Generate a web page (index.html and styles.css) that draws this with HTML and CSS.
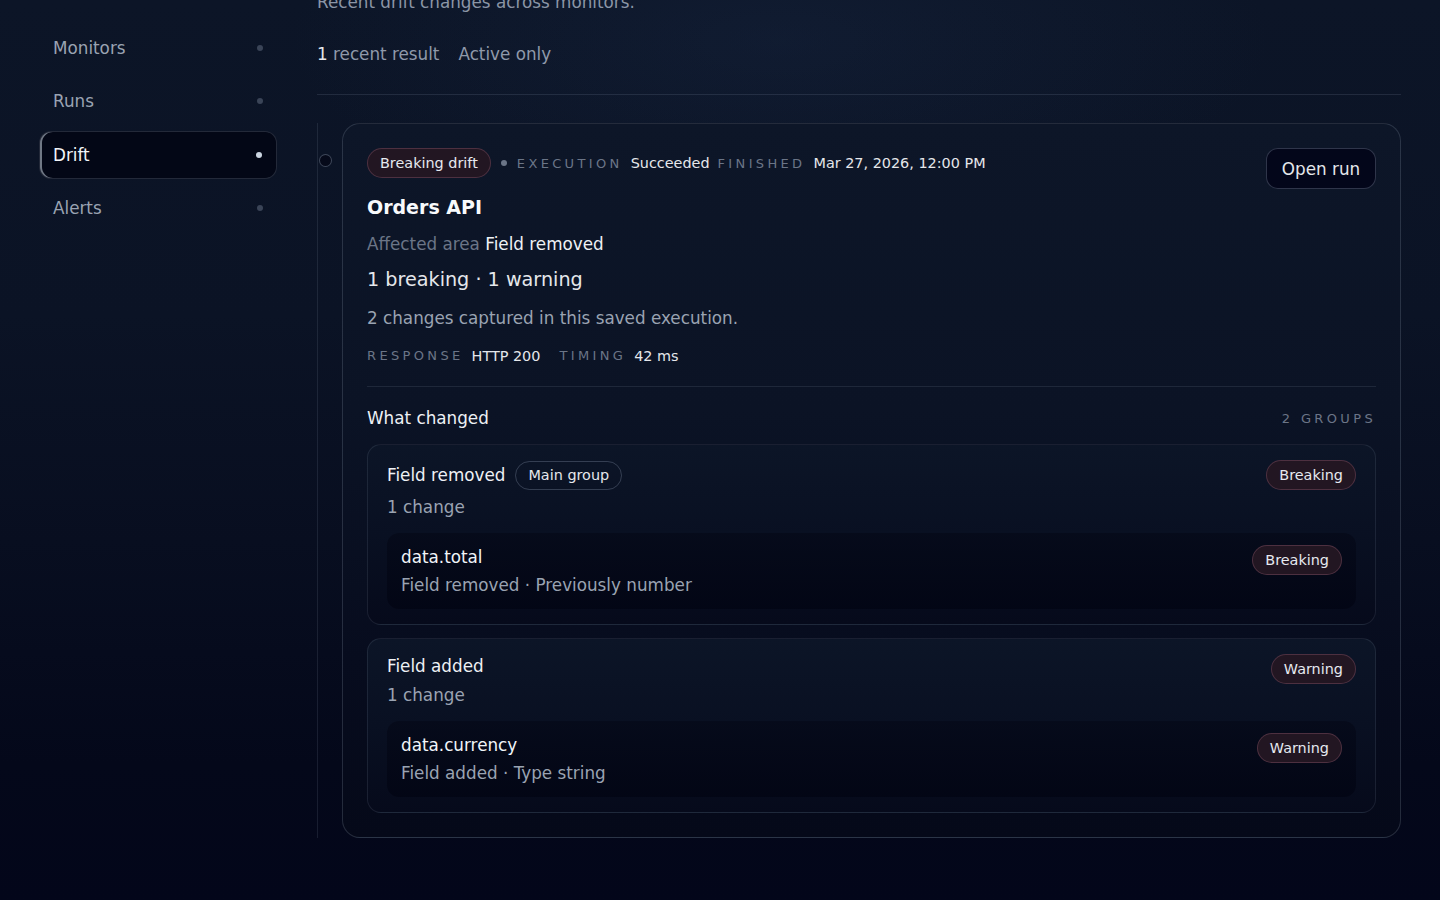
FILE: index.html
```html
<!DOCTYPE html>
<html lang="en">
<head>
<meta charset="utf-8">
<title>Drift</title>
<link rel="stylesheet" href="styles.css">
</head>
<body>
<div class="layout">
  <nav class="sidebar">
    <a class="nav-item"><span>Monitors</span><i class="nav-dot"></i></a>
    <a class="nav-item"><span>Runs</span><i class="nav-dot"></i></a>
    <a class="nav-item active"><span>Drift</span><i class="nav-dot"></i></a>
    <a class="nav-item"><span>Alerts</span><i class="nav-dot"></i></a>
  </nav>
  <main class="main">
    <p class="subtitle">Recent drift changes across monitors.</p>
    <div class="filters">
      <span class="count"><b>1</b> recent result</span>
      <span class="filter">Active only</span>
    </div>
    <hr class="rule">
    <div class="timeline">
      <div class="timeline-item">
        <span class="marker"></span>
        <article class="card">
          <div class="card-head">
            <div class="card-info">
              <div class="meta">
                <span class="badge">Breaking drift</span>
                <span class="meta-dot"></span>
                <span class="label">Execution</span>
                <span class="value">Succeeded</span>
                <span class="label">Finished</span>
                <span class="value">Mar 27, 2026, 12:00 PM</span>
              </div>
              <h2 class="title">Orders API</h2>
              <p class="affected"><span class="muted">Affected area</span> Field removed</p>
              <p class="summary">1 breaking · 1 warning</p>
              <p class="desc">2 changes captured in this saved execution.</p>
              <div class="metrics">
                <span class="label">Response</span><span class="value">HTTP 200</span>
                <span class="label sep">Timing</span><span class="value">42 ms</span>
              </div>
            </div>
            <button class="open-btn">Open run</button>
          </div>
          <hr class="card-rule">
          <div class="changes-head">
            <span class="changes-title">What changed</span>
            <span class="label">2 groups</span>
          </div>
          <div class="groups">
            <section class="group">
              <div class="group-head">
                <div class="group-info">
                  <div class="group-name">
                    <span>Field removed</span>
                    <span class="pill">Main group</span>
                  </div>
                  <p class="group-count">1 change</p>
                </div>
                <span class="badge">Breaking</span>
              </div>
              <div class="change">
                <div class="change-text">
                  <p class="change-path">data.total</p>
                  <p class="change-desc">Field removed · Previously number</p>
                </div>
                <span class="badge">Breaking</span>
              </div>
            </section>
            <section class="group">
              <div class="group-head">
                <div class="group-info">
                  <div class="group-name">
                    <span>Field added</span>
                  </div>
                  <p class="group-count">1 change</p>
                </div>
                <span class="badge">Warning</span>
              </div>
              <div class="change">
                <div class="change-text">
                  <p class="change-path">data.currency</p>
                  <p class="change-desc">Field added · Type string</p>
                </div>
                <span class="badge">Warning</span>
              </div>
            </section>
          </div>
        </article>
      </div>
    </div>
  </main>
</div>
</body>
</html>
```

FILE: styles.css
```css
* { box-sizing: border-box; }
html, body { height: 100%; }
body {
  margin: 0;
  font-family: "DejaVu Sans", "Noto Sans", sans-serif;
  color: #e5e7eb;
  background:
    radial-gradient(ellipse 700px 260px at 780px 40px, rgba(30, 48, 80, 0.25), transparent 70%),
    linear-gradient(180deg, #0c1527 0%, #0b1325 35%, #080e20 60%, #04081a 85%, #03061a 100%);
  overflow: hidden;
}
p, h2 { margin: 0; }

.layout {
  display: grid;
  grid-template-columns: 238px 1fr;
  column-gap: 40px;
  padding: 24px 39px 0 39px;
  height: 900px;
}

/* Sidebar */
.sidebar {
  display: flex;
  flex-direction: column;
  gap: 5.4px;
}
.nav-item {
  display: flex;
  align-items: center;
  justify-content: space-between;
  height: 48px;
  padding: 0 13px;
  border-radius: 12px;
  font-size: 16.8px;
  color: #9aa3b2;
  border: 1px solid transparent;
}
.nav-dot {
  width: 6px;
  height: 6px;
  border-radius: 50%;
  background: #3a4457;
}
.nav-item.active {
  background: #030716;
  color: #f1f5f9;
  border-color: rgba(148, 163, 184, 0.22);
  box-shadow: inset 2px 0 0 rgba(203, 213, 225, 0.55);
}
.nav-item.active .nav-dot { background: #cbd5e1; margin-right: 1px; }

/* Main */
.main {
  margin-top: -34px;
  display: flex;
  flex-direction: column;
}
.subtitle {
  font-size: 16.8px;
  line-height: 24px;
  color: #8b95a6;
}
.filters {
  margin-top: 28px;
  display: flex;
  gap: 19px;
  font-size: 16.8px;
  line-height: 24px;
  color: #8f99aa;
}
.count b { font-weight: normal; color: #e5e7eb; }
.rule {
  margin: 28px 0 0 0;
  border: 0;
  border-top: 1px solid rgba(148, 163, 184, 0.16);
  height: 0;
}

.timeline { margin-top: 28px; }
.timeline-item {
  position: relative;
  padding-left: 24px;
  border-left: 1px solid rgba(148, 163, 184, 0.14);
}
.marker {
  position: absolute;
  left: 1px;
  top: 31px;
  width: 13px;
  height: 13px;
  border-radius: 50%;
  border: 1px solid rgba(148, 163, 184, 0.4);
  background: #060a1a;
}

.card {
  border: 1px solid rgba(148, 163, 184, 0.22);
  border-radius: 18px;
  padding: 24px;
  background: linear-gradient(180deg, #0d1628 0%, #0b1325 40%, #070c1e 75%, #050919 100%);
}
.card-head {
  display: flex;
  justify-content: space-between;
  align-items: flex-start;
}
.card-info { display: flex; flex-direction: column; }

.meta {
  display: flex;
  align-items: center;
  gap: 8px;
  height: 30px;
}
.badge {
  display: inline-flex;
  align-items: center;
  height: 30px;
  padding: 0 12px;
  border-radius: 15px;
  background: #221622;
  border: 1px solid rgba(190, 120, 145, 0.28);
  color: #e6e9f0;
  font-size: 14.4px;
  white-space: nowrap;
  flex-shrink: 0;
}
.meta-dot {
  width: 6px;
  height: 6px;
  border-radius: 50%;
  background: #6b7587;
  margin: 0 2px;
}
.label {
  font-size: 13px;
  letter-spacing: 3.35px;
  text-transform: uppercase;
  color: #6b7587;
}
.value {
  font-size: 14.4px;
  color: #e5e7eb;
}
.title {
  margin-top: 17px;
  font-size: 19px;
  line-height: 24px;
  font-weight: bold;
  color: #f8fafc;
}
.affected {
  margin-top: 13px;
  font-size: 16.8px;
  line-height: 24px;
  color: #eef1f5;
}
.muted { color: #6b7587; }
.summary {
  margin-top: 11px;
  font-size: 19.2px;
  line-height: 26px;
  color: #e5e7eb;
}
.desc {
  margin-top: 13px;
  font-size: 16.8px;
  line-height: 24px;
  color: #9aa3b2;
}
.metrics {
  margin-top: 16px;
  display: flex;
  align-items: center;
  gap: 8px;
  line-height: 20px;
}
.metrics .sep { margin-left: 11px; }

.open-btn {
  height: 41px;
  width: 110px;
  border-radius: 12px;
  background: #03061a;
  border: 1px solid rgba(148, 163, 184, 0.3);
  color: #e5e7eb;
  font-family: inherit;
  font-size: 16.8px;
  padding: 0;
}

.card-rule {
  margin: 20px 0 0 0;
  border: 0;
  border-top: 1px solid rgba(148, 163, 184, 0.14);
  height: 0;
}
.changes-head {
  margin-top: 19px;
  display: flex;
  justify-content: space-between;
  align-items: center;
  height: 24px;
}
.changes-title { font-size: 16.8px; color: #eef1f5; }

.groups {
  margin-top: 14px;
  display: flex;
  flex-direction: column;
  gap: 13px;
}
.group {
  border: 1px solid rgba(148, 163, 184, 0.14);
  border-radius: 14px;
  padding: 15px 19px 15px 19px;
  background: linear-gradient(180deg, #0c1527 0%, #091022 50%, #060a1b 100%);
}
.group-head {
  display: flex;
  justify-content: space-between;
  align-items: flex-start;
}
.group-info { display: flex; flex-direction: column; }
.group-name {
  display: flex;
  align-items: center;
  gap: 10px;
  min-height: 24px;
  font-size: 16.8px;
  line-height: 24px;
  color: #eef1f5;
}
.pill {
  display: inline-flex;
  align-items: center;
  height: 29px;
  margin: 0.5px 0;
  padding: 0 12px;
  border-radius: 15px;
  border: 1px solid rgba(148, 163, 184, 0.3);
  font-size: 14.4px;
  color: #e5e7eb;
}
.group-count {
  font-size: 16.8px;
  line-height: 24px;
  color: #9aa3b2;
  margin-top: 5px;
}
.change {
  margin-top: 14px;
  display: flex;
  justify-content: space-between;
  align-items: flex-start;
  padding: 12px 14px 12px 14px;
  border-radius: 12px;
  background: linear-gradient(180deg, rgba(5, 9, 24, 0.75) 0%, rgba(2, 5, 20, 0.85) 100%);
}
.change-path {
  font-size: 16.8px;
  line-height: 24px;
  color: #f1f5f9;
}
.change-desc {
  margin-top: 4px;
  font-size: 16.8px;
  line-height: 24px;
  color: #9aa3b2;
}
```
